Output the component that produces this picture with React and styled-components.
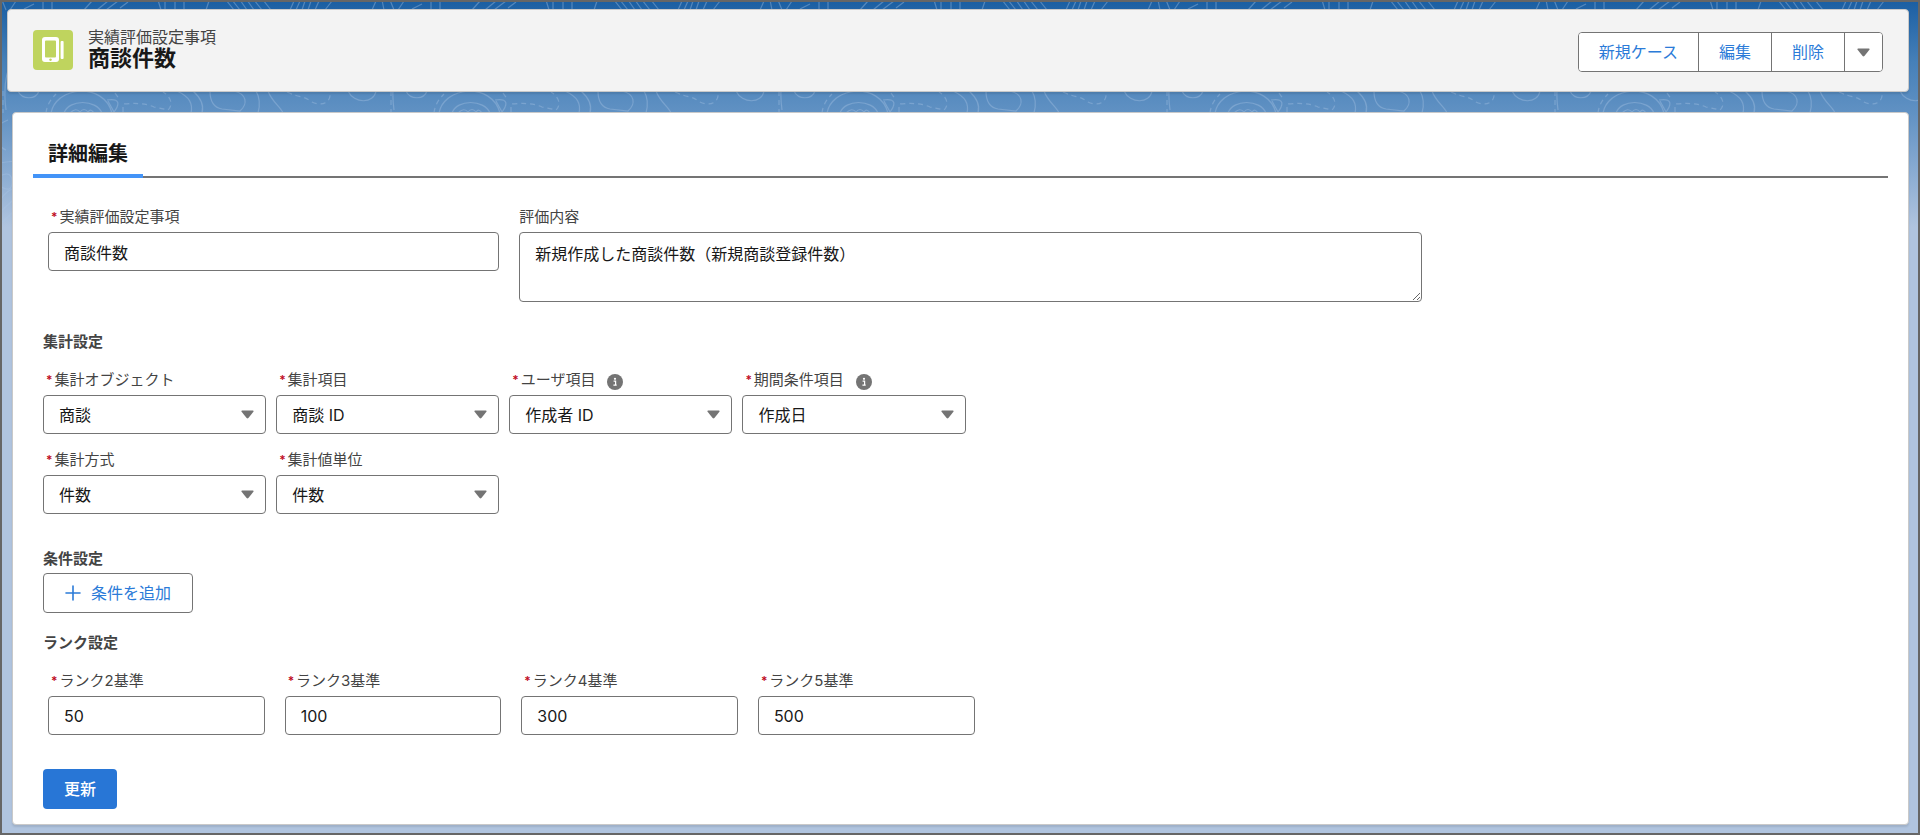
import React, { useId } from "react";
import styled, { createGlobalStyle } from "styled-components";

const GlobalStyle = createGlobalStyle`
  *, *::before, *::after { box-sizing: border-box; }
  body {
    margin: 0;
    color: #181818;
    font-family: Inter, "Noto Sans CJK JP", sans-serif;
    font-size: 16px;
    line-height: 20px;
  }
  button, input, select, textarea { font: inherit; color: inherit; margin: 0; }
  h1, h2, p { margin: 0; }
`;

const Page = styled.div`
  position: relative;
  min-height: 100vh;
  display: flex;
  flex-direction: column;
  gap: 20px;
  padding: 7px 9px 8px 5px;
  border: 2px solid #666;
  background: linear-gradient(#1b5fa3, #4680b8 60px, #6091c3 110px, #b0c4df 225px);
`;

const Backdrop = styled.svg`
  position: absolute;
  top: 0;
  left: 0;
  width: 100%;
  height: 230px;
`;

const panel = `
  position: relative;
  border: 1px solid #c9c9c9;
  border-radius: 4px;
  box-shadow: 0 2px 2px rgba(0, 0, 0, 0.1);
`;

const RecordHeader = styled.header`
  ${panel}
  display: flex;
  align-items: flex-end;
  justify-content: space-between;
  padding: 20px 25px 19px;
  background: #f3f3f3;
`;

const Identity = styled.div`
  display: flex;
  align-items: flex-start;
  gap: 15px;
`;

const RecordIcon = styled.svg`
  width: 40px;
  height: 40px;
  border-radius: 4px;
  background: #bfd45e;
`;

const ObjectName = styled.p`
  color: #444;
  line-height: 14px;
`;

const RecordName = styled.h1`
  font-size: 22px;
  font-weight: 700;
  line-height: 28px;
`;

const ButtonGroup = styled.div`
  display: flex;
  border: 1px solid #747474;
  border-radius: 4px;
  background: #fff;
  overflow: hidden;
`;

const GroupButton = styled.button`
  display: flex;
  align-items: center;
  height: 38px;
  padding: 0 ${(p) => (p.$icon ? 12 : 20)}px;
  border: 0;
  background: #fff;
  color: #2b7bd8;
  & + & { border-left: 1px solid #747474; }
`;

const Card = styled.main`
  ${panel}
  flex: 1;
  margin-left: 5px;
  padding: 20px 20px 15px;
  background: #fff;
`;

const TabList = styled.div`
  display: flex;
  box-shadow: inset 0 -2px #747474;
`;

const Tab = styled.button`
  height: 45px;
  padding: 0 15px;
  border: 0;
  border-bottom: 4px solid #4394f8;
  background: none;
  font-size: 20px;
  font-weight: 700;
`;

const Form = styled.form`
  padding: 29px 0 0 10px;
`;

const Section = styled.section`
  margin-top: ${(p) => p.$top}px;
`;

const SectionTitle = styled.h2`
  color: #444;
  font-size: 15px;
  font-weight: 700;
`;

const BasicsGrid = styled.div`
  display: grid;
  grid-template-columns: 1fr 2fr;
  gap: 20px;
  width: 75%;
  padding: 0 5px;
`;

const SelectGrid = styled.div`
  display: grid;
  grid-template-columns: repeat(4, minmax(0, 1fr));
  gap: 16px 10px;
  width: 50%;
  margin-top: 18px;
`;

const RankGrid = styled.div`
  display: grid;
  grid-template-columns: repeat(4, minmax(0, 1fr));
  gap: 20px;
  width: calc(50% + 14px);
  margin-top: 18px;
  padding: 0 5px;
`;

const FieldBox = styled.div`
  display: flex;
  flex-direction: column;
  gap: 5px;
`;

const LabelRow = styled.div`
  display: flex;
  gap: 12px;
  height: 20px;
  padding-left: ${(p) => (p.$required ? 3 : 0)}px;
`;

const Label = styled.label`
  display: flex;
  gap: 2px;
  color: #444;
  font-size: 15px;
  white-space: nowrap;
`;

const Asterisk = styled.abbr`
  color: #c00a1e;
  font-size: 12px;
  font-weight: 600;
  text-decoration: none;
`;

const HelpButton = styled.button`
  display: flex;
  align-self: flex-end;
  padding: 0;
  border: 0;
  background: none;
`;

const control = `
  display: block;
  width: 100%;
  border: 1px solid #747474;
  border-radius: 4px;
  background: #fff;
`;

const TextInput = styled.input`
  ${control}
  height: 39px;
  padding: 0 15px;
`;

const TextArea = styled.textarea`
  ${control}
  height: 70px;
  padding: 11px 15px;
  resize: vertical;
`;

const SelectWrap = styled.div`
  position: relative;
`;

const Select = styled.select`
  ${control}
  height: 39px;
  padding: 0 36px 0 15px;
  appearance: none;
`;

const SelectArrow = styled.span`
  position: absolute;
  top: 0;
  right: 12px;
  display: flex;
  align-items: center;
  height: 100%;
  pointer-events: none;
`;

const AddButton = styled.button`
  display: flex;
  align-items: center;
  gap: 10px;
  height: 40px;
  margin-top: 4px;
  padding: 0 21px;
  border: 1px solid #747474;
  border-radius: 4px;
  background: #fff;
  color: #2b7bd8;
`;

const SubmitButton = styled.button`
  height: 40px;
  margin-top: 34px;
  padding: 0 21px;
  border: 0;
  border-radius: 4px;
  background: #2876d6;
  color: #fff;
  font-weight: 500;
`;

const Arrow = () => (
  <svg width="13" height="9" viewBox="0 0 13 9" aria-hidden="true">
    <path d="M1 0.5h11q1 .3.4 1.2L7.4 8q-.9.9-1.8 0L.6 1.7Q0 .8 1 .5z" fill="#747474" />
  </svg>
);

const Plus = () => (
  <svg width="16" height="16" viewBox="0 0 16 16" aria-hidden="true">
    <path d="M8 1v14M1 8h14" stroke="#2b7bd8" strokeWidth="1.6" strokeLinecap="round" />
  </svg>
);

const Info = () => (
  <svg width="16" height="16" viewBox="0 0 16 16" aria-hidden="true">
    <circle cx="8" cy="8" r="8" fill="#747474" />
    <circle cx="8" cy="4.8" r="1.1" fill="#fff" />
    <path d="M6.6 7.2h2v3.6M6.4 11.2h3.3" fill="none" stroke="#fff" strokeWidth="1.2" />
  </svg>
);

const Contours = () => (
  <Backdrop aria-hidden="true">
    <defs>
      <pattern id="contours" x="58" y="-2" width="388" height="260" patternUnits="userSpaceOnUse">
        <g fill="none" stroke="#a9c4e4" strokeWidth="1.2" opacity="0.38">
          <path d="M24 10l8-9M37 10l11-9M46 10l12-9M60 8l8-6M98 0l3 10M105 0v10M115 0v10M124 2v8M146 10l3-9M166 0l8 10M172 0l8 10M180 0l7 10M187 0l7 10M194 0l8 10M203 0l8 10M230 10l4-9M236 10l4-9M242 10l3-9M248 10l3-9M255 10l4-9M265 10l7-9M312 10l4-9M322 0l2 10M330 0l4 10M338 10l6-9M352 9l10-5M371 0v10M380 2v8" />
          <path d="M-9 113C-4 86 44 82 52 113M4 113C9 99 36 99 42 113M10 113q6-6 10-1q4-5 8 0q3-4 6 1M47 100C60 98 60 104 54 112L48 101" />
          <path d="M379 113C384 86 432 82 440 113" />
          <path d="M117 91C130 97 133 104 131 113M133 91C142 99 144 106 142 113" />
          <path d="M150 91C150 104 156 108 162 109L180 111C188 104 187 94 174 91" />
          <path d="M196 91C200 98 200 106 198 113M208 91C212 102 220 106 223 113" />
          <path d="M288 91C294 104 314 104 316 91M346 91C350 100 364 100 367 91" />
          <path d="M55 93l5 7M63 112V104C75 103 85 103 94 107L108 110C114 104 110 96 103 92M227 92C240 98 245 96 250 101C260 107 272 104 270 91M331 91v22M374 113C375 104 380 98 384 94" strokeDasharray="5 4" />
          <path d="M340 60q-10 20-6 50M336 120c-14 4-16 24-2 30M328 163q20-4 60 0M328 176q12-6 12 6t-12 4M328 200q12-16 20-10M328 212l20-18M328 224l20-18" />
        </g>
      </pattern>
    </defs>
    <rect width="100%" height="100%" fill="url(#contours)" />
  </Backdrop>
);

function Field({ label, required, help, render }) {
  const id = useId();
  return (
    <FieldBox>
      <LabelRow $required={required}>
        <Label htmlFor={id}>
          {required && <Asterisk title="必須">*</Asterisk>}
          {label}
        </Label>
        {help && (
          <HelpButton type="button" aria-label="ヘルプ">
            <Info />
          </HelpButton>
        )}
      </LabelRow>
      {render(id)}
    </FieldBox>
  );
}

const selects = [
  { label: "集計オブジェクト", value: "商談" },
  { label: "集計項目", value: "商談 ID" },
  { label: "ユーザ項目", value: "作成者 ID", help: true },
  { label: "期間条件項目", value: "作成日", help: true },
  { label: "集計方式", value: "件数" },
  { label: "集計値単位", value: "件数" },
];

const ranks = [
  { label: "ランク2基準", value: "50" },
  { label: "ランク3基準", value: "100" },
  { label: "ランク4基準", value: "300" },
  { label: "ランク5基準", value: "500" },
];

export default function App() {
  return (
    <>
      <GlobalStyle />
      <Page>
        <Contours />
        <RecordHeader>
          <Identity>
            <RecordIcon viewBox="0 0 40 40" aria-hidden="true">
              <path
                fill="#fff"
                fillRule="evenodd"
                d="M12 7h11a3 3 0 0 1 3 3v19a3 3 0 0 1-3 3H12a3 3 0 0 1-3-3V10a3 3 0 0 1 3-3zM13 10.500a1 1 0 0 0-1 1v15a1 1 0 0 0 1 1h9a1 1 0 0 0 1-1v-15a1 1 0 0 0-1-1zM17.500 28.400a1.300 1.300 0 1 0 .01 0z"
              />
              <rect x="27.600" y="11" width="3" height="18" rx="1" fill="#fff" />
            </RecordIcon>
            <div>
              <ObjectName>実績評価設定事項</ObjectName>
              <RecordName>商談件数</RecordName>
            </div>
          </Identity>
          <ButtonGroup>
            <GroupButton type="button">新規ケース</GroupButton>
            <GroupButton type="button">編集</GroupButton>
            <GroupButton type="button">削除</GroupButton>
            <GroupButton type="button" $icon aria-label="その他のアクション">
              <Arrow />
            </GroupButton>
          </ButtonGroup>
        </RecordHeader>

        <Card>
          <TabList role="tablist">
            <Tab type="button" role="tab" aria-selected="true">詳細編集</Tab>
          </TabList>
          <Form onSubmit={(e) => e.preventDefault()}>
            <BasicsGrid>
              <Field
                label="実績評価設定事項"
                required
                render={(id) => <TextInput id={id} defaultValue="商談件数" />}
              />
              <Field
                label="評価内容"
                render={(id) => (
                  <TextArea id={id} defaultValue="新規作成した商談件数（新規商談登録件数）" />
                )}
              />
            </BasicsGrid>

            <Section $top={30}>
              <SectionTitle>集計設定</SectionTitle>
              <SelectGrid>
                {selects.map(({ label, value, help }) => (
                  <Field
                    key={label}
                    label={label}
                    required
                    help={help}
                    render={(id) => (
                      <SelectWrap>
                        <Select id={id} defaultValue={value}>
                          <option>{value}</option>
                        </Select>
                        <SelectArrow>
                          <Arrow />
                        </SelectArrow>
                      </SelectWrap>
                    )}
                  />
                ))}
              </SelectGrid>
            </Section>

            <Section $top={35}>
              <SectionTitle>条件設定</SectionTitle>
              <AddButton type="button">
                <Plus />
                条件を追加
              </AddButton>
            </Section>

            <Section $top={20}>
              <SectionTitle>ランク設定</SectionTitle>
              <RankGrid>
                {ranks.map(({ label, value }) => (
                  <Field
                    key={label}
                    label={label}
                    required
                    render={(id) => <TextInput id={id} inputMode="numeric" defaultValue={value} />}
                  />
                ))}
              </RankGrid>
            </Section>

            <SubmitButton type="submit">更新</SubmitButton>
          </Form>
        </Card>
      </Page>
    </>
  );
}
